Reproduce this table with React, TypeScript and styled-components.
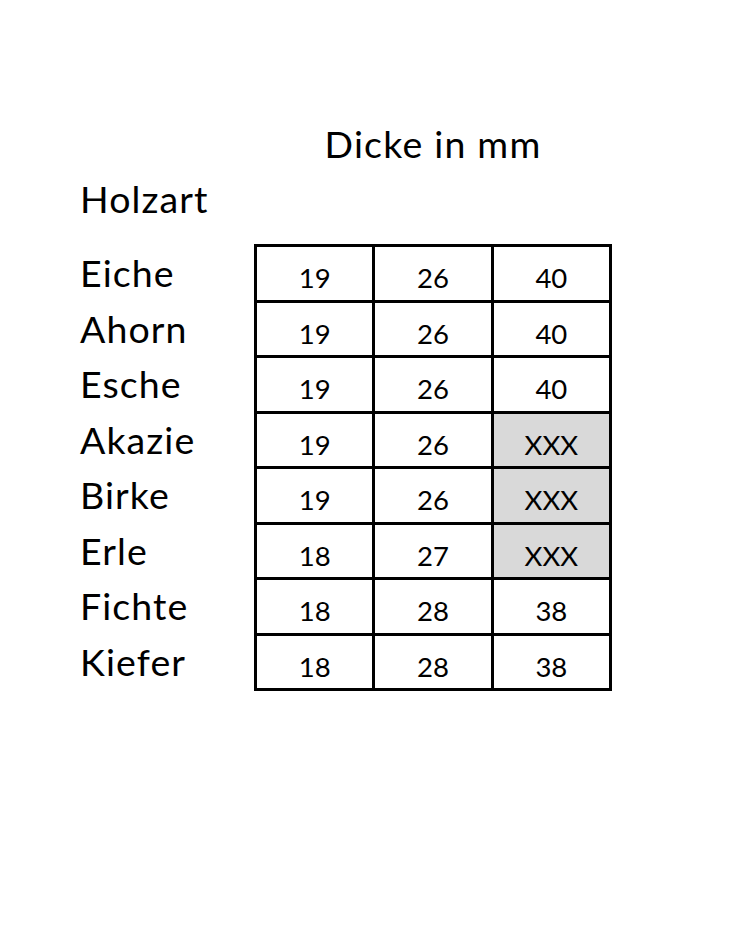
import styled, { createGlobalStyle } from 'styled-components';

const GlobalStyle = createGlobalStyle`
  html, body {
    margin: 0;
    padding: 0;
    background: #ffffff;
  }
  body {
    font-family: Lato, "Open Sans", sans-serif;
    color: #000000;
  }
`;

const LABEL_W = 174;
const TABLE_W = 358;
const ROW_H = 55.5;

interface Row {
  name: string;
  values: string[];
  missing?: boolean;
}

const rows: Row[] = [
  { name: 'Eiche', values: ['19', '26', '40'] },
  { name: 'Ahorn', values: ['19', '26', '40'] },
  { name: 'Esche', values: ['19', '26', '40'] },
  { name: 'Akazie', values: ['19', '26', 'XXX'], missing: true },
  { name: 'Birke', values: ['19', '26', 'XXX'], missing: true },
  { name: 'Erle', values: ['18', '27', 'XXX'], missing: true },
  { name: 'Fichte', values: ['18', '28', '38'] },
  { name: 'Kiefer', values: ['18', '28', '38'] },
];

const Page = styled.div`
  padding: 121px 0 0 80px;
  width: ${LABEL_W + TABLE_W}px;
`;

const Heading = styled.div`
  padding-left: ${LABEL_W}px;
  width: ${TABLE_W}px;
  text-align: center;
  font-size: 37.5px;
  line-height: 45px;
  letter-spacing: 1.2px;
`;

const ColumnTitle = styled.div`
  margin-top: 10px;
  font-size: 37.5px;
  line-height: 45px;
  letter-spacing: 1.1px;
`;

const Board = styled.div`
  display: flex;
  margin-top: 23px;
`;

const Labels = styled.div`
  width: ${LABEL_W}px;
  display: flex;
  flex-direction: column;
`;

const Label = styled.div`
  height: ${ROW_H}px;
  box-sizing: border-box;
  padding-top: 6px;
  font-size: 37.5px;
  line-height: 45px;
  letter-spacing: 1.1px;
`;

const Grid = styled.div`
  width: ${TABLE_W}px;
  height: 447px;
  box-sizing: border-box;
  display: grid;
  grid-template-columns: repeat(3, 1fr);
  grid-template-rows: repeat(8, 1fr);
  gap: 3px;
  padding: 3px;
  background: #000000;
`;

const Cell = styled.div<{ $shaded?: boolean }>`
  background: ${p => (p.$shaded ? '#d9d9d9' : '#ffffff')};
  text-align: center;
  font-size: 27.5px;
  line-height: 33px;
  padding-top: 14px;
  box-sizing: border-box;
`;

export default function App() {
  return (
    <>
      <GlobalStyle />
      <Page>
        <Heading>Dicke in mm</Heading>
        <ColumnTitle>Holzart</ColumnTitle>
        <Board>
          <Labels>
            {rows.map(r => (
              <Label key={r.name}>{r.name}</Label>
            ))}
          </Labels>
          <Grid>
            {rows.map(r =>
              r.values.map((v, i) => (
                <Cell key={r.name + i} $shaded={r.missing && i === 2}>
                  {v}
                </Cell>
              ))
            )}
          </Grid>
        </Board>
      </Page>
    </>
  );
}
